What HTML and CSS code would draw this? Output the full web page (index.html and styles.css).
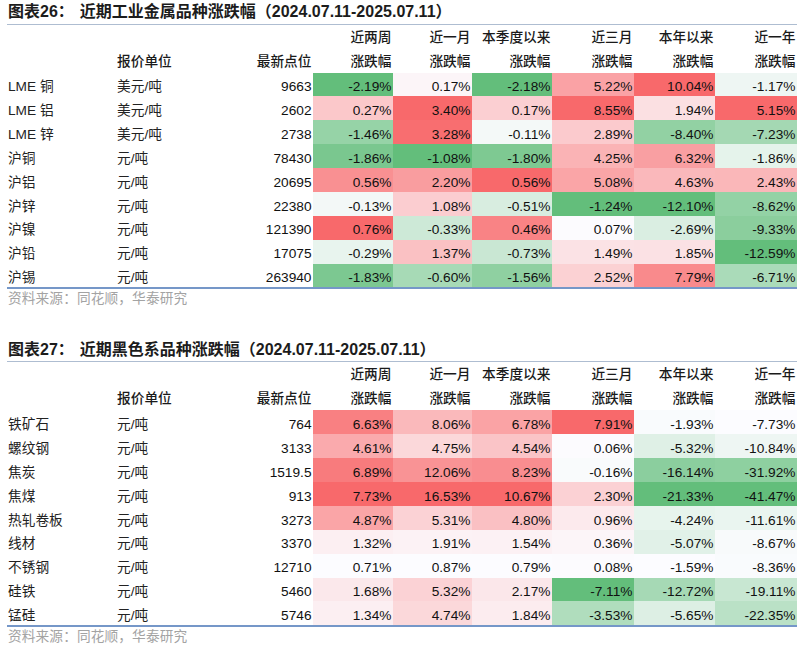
FILE: index.html
```html
<!DOCTYPE html>
<html lang="zh-CN">
<head>
<meta charset="utf-8">
<title>近期金属及黑色系品种涨跌幅</title>
<link rel="stylesheet" href="styles.css">
</head>
<body>
<div class="page">
  <section class="figure">
    <h2 class="fig-title"><span class="fig-no">图表26：</span><span class="fig-name">近期工业金属品种涨跌幅（2024.07.11-2025.07.11）</span></h2>
    <table class="data-table">
      <colgroup>
        <col class="c-name"><col class="c-unit"><col class="c-val">
        <col class="c-p1"><col class="c-p2"><col class="c-p3"><col class="c-p4"><col class="c-p5"><col class="c-p6">
      </colgroup>
      <thead>
        <tr><th></th><th></th><th></th><th>近两周</th><th>近一月</th><th>本季度以来</th><th>近三月</th><th>本年以来</th><th>近一年</th></tr>
        <tr><th></th><th class="left">报价单位</th><th>最新点位</th><th>涨跌幅</th><th>涨跌幅</th><th>涨跌幅</th><th>涨跌幅</th><th>涨跌幅</th><th>涨跌幅</th></tr>
      </thead>
      <tbody>
        <tr><td class="name">LME 铜</td><td class="unit">美元/吨</td><td>9663</td><td>-2.19%</td><td>0.17%</td><td>-2.18%</td><td>5.22%</td><td>10.04%</td><td>-1.17%</td></tr>
        <tr><td class="name">LME 铝</td><td class="unit">美元/吨</td><td>2602</td><td>0.27%</td><td>3.40%</td><td>0.17%</td><td>8.55%</td><td>1.94%</td><td>5.15%</td></tr>
        <tr><td class="name">LME 锌</td><td class="unit">美元/吨</td><td>2738</td><td>-1.46%</td><td>3.28%</td><td>-0.11%</td><td>2.89%</td><td>-8.40%</td><td>-7.23%</td></tr>
        <tr><td class="name">沪铜</td><td class="unit">元/吨</td><td>78430</td><td>-1.86%</td><td>-1.08%</td><td>-1.80%</td><td>4.25%</td><td>6.32%</td><td>-1.86%</td></tr>
        <tr><td class="name">沪铝</td><td class="unit">元/吨</td><td>20695</td><td>0.56%</td><td>2.20%</td><td>0.56%</td><td>5.08%</td><td>4.63%</td><td>2.43%</td></tr>
        <tr><td class="name">沪锌</td><td class="unit">元/吨</td><td>22380</td><td>-0.13%</td><td>1.08%</td><td>-0.51%</td><td>-1.24%</td><td>-12.10%</td><td>-8.62%</td></tr>
        <tr><td class="name">沪镍</td><td class="unit">元/吨</td><td>121390</td><td>0.76%</td><td>-0.33%</td><td>0.46%</td><td>0.07%</td><td>-2.69%</td><td>-9.33%</td></tr>
        <tr><td class="name">沪铅</td><td class="unit">元/吨</td><td>17075</td><td>-0.29%</td><td>1.37%</td><td>-0.73%</td><td>1.49%</td><td>1.85%</td><td>-12.59%</td></tr>
        <tr><td class="name">沪锡</td><td class="unit">元/吨</td><td>263940</td><td>-1.83%</td><td>-0.60%</td><td>-1.56%</td><td>2.52%</td><td>7.79%</td><td>-6.71%</td></tr>
      </tbody>
    </table>
    <p class="source">资料来源：同花顺，华泰研究</p>
  </section>

  <section class="figure second">
    <h2 class="fig-title"><span class="fig-no">图表27：</span><span class="fig-name">近期黑色系品种涨跌幅（2024.07.11-2025.07.11）</span></h2>
    <table class="data-table">
      <colgroup>
        <col class="c-name"><col class="c-unit"><col class="c-val">
        <col class="c-p1"><col class="c-p2"><col class="c-p3"><col class="c-p4"><col class="c-p5"><col class="c-p6">
      </colgroup>
      <thead>
        <tr><th></th><th></th><th></th><th>近两周</th><th>近一月</th><th>本季度以来</th><th>近三月</th><th>本年以来</th><th>近一年</th></tr>
        <tr><th></th><th class="left">报价单位</th><th>最新点位</th><th>涨跌幅</th><th>涨跌幅</th><th>涨跌幅</th><th>涨跌幅</th><th>涨跌幅</th><th>涨跌幅</th></tr>
      </thead>
      <tbody>
        <tr><td class="name">铁矿石</td><td class="unit">元/吨</td><td>764</td><td>6.63%</td><td>8.06%</td><td>6.78%</td><td>7.91%</td><td>-1.93%</td><td>-7.73%</td></tr>
        <tr><td class="name">螺纹钢</td><td class="unit">元/吨</td><td>3133</td><td>4.61%</td><td>4.75%</td><td>4.54%</td><td>0.06%</td><td>-5.32%</td><td>-10.84%</td></tr>
        <tr><td class="name">焦炭</td><td class="unit">元/吨</td><td>1519.5</td><td>6.89%</td><td>12.06%</td><td>8.23%</td><td>-0.16%</td><td>-16.14%</td><td>-31.92%</td></tr>
        <tr><td class="name">焦煤</td><td class="unit">元/吨</td><td>913</td><td>7.73%</td><td>16.53%</td><td>10.67%</td><td>2.30%</td><td>-21.33%</td><td>-41.47%</td></tr>
        <tr><td class="name">热轧卷板</td><td class="unit">元/吨</td><td>3273</td><td>4.87%</td><td>5.31%</td><td>4.80%</td><td>0.96%</td><td>-4.24%</td><td>-11.61%</td></tr>
        <tr><td class="name">线材</td><td class="unit">元/吨</td><td>3370</td><td>1.32%</td><td>1.91%</td><td>1.54%</td><td>0.36%</td><td>-5.07%</td><td>-8.67%</td></tr>
        <tr><td class="name">不锈钢</td><td class="unit">元/吨</td><td>12710</td><td>0.71%</td><td>0.87%</td><td>0.79%</td><td>0.08%</td><td>-1.59%</td><td>-8.36%</td></tr>
        <tr><td class="name">硅铁</td><td class="unit">元/吨</td><td>5460</td><td>1.68%</td><td>5.32%</td><td>2.17%</td><td>-7.11%</td><td>-12.72%</td><td>-19.11%</td></tr>
        <tr><td class="name">锰硅</td><td class="unit">元/吨</td><td>5746</td><td>1.34%</td><td>4.74%</td><td>1.84%</td><td>-3.53%</td><td>-5.65%</td><td>-22.35%</td></tr>
      </tbody>
    </table>
    <p class="source">资料来源：同花顺，华泰研究</p>
  </section>
</div>
<script src="script.js"></script>
</body>
</html>
```

FILE: styles.css
```css
* { box-sizing: border-box; }

html, body {
  margin: 0;
  padding: 0;
  background: #ffffff;
}

body {
  font-family: "Liberation Sans", "Noto Sans CJK SC", sans-serif;
  color: #141414;
}

.page {
  width: 797px;
  padding-left: 7px;
}

.figure {
  width: 790px;
}

.figure.second {
  margin-top: 28.5px;
}

.fig-title {
  margin: 0;
  height: 24.5px;
  padding: 1px 0 0 1px;
  line-height: 22px;
  font-size: 16px;
  font-weight: 700;
  color: #1c1c1c;
  border-bottom: 1.5px solid #aebdd1;
  white-space: nowrap;
}

.fig-name {
  margin-left: 6px;
}

.data-table {
  width: 790px;
  table-layout: fixed;
  border-collapse: separate;
  border-spacing: 0;
  border-bottom: 2px solid #7597c8;
  font-size: 13.7px;
}

.c-name { width: 110px; }
.c-unit { width: 116px; }
.c-val  { width: 80px; }
.c-p1   { width: 80px; }
.c-p2   { width: 79px; }
.c-p3   { width: 80px; }
.c-p4   { width: 82px; }
.c-p5   { width: 81px; }
.c-p6   { width: 82px; }

.data-table th,
.data-table td {
  padding: 0 1.5px 0 0;
  text-align: right;
  vertical-align: bottom;
  line-height: 16px;
  white-space: nowrap;
  overflow: hidden;
}

.data-table thead tr {
  height: 24px;
}

.data-table th {
  font-weight: 500;
  padding-bottom: 3px;
  color: #1a1a1a;
}

.data-table th.left {
  text-align: left;
}

.data-table tbody tr {
  height: 23.875px;
}

.data-table td {
  padding-bottom: 1.2px;
  color: #111111;
}

.data-table td.name {
  text-align: left;
  padding-left: 1px;
  color: #222222;
}

.data-table td.unit {
  text-align: left;
  color: #222222;
}

.source {
  margin: 0;
  height: 20px;
  line-height: 20px;
  padding-left: 1px;
  font-size: 13.7px;
  color: #a3a3a3;
  letter-spacing: 0.1px;
}
```

FILE: script.js
```js
(function () {
  var GREEN = [99, 190, 123];
  var WHITE = [252, 252, 255];
  var RED = [248, 105, 107];

  function mix(a, b, t) {
    return [0, 1, 2].map(function (i) {
      return Math.round(a[i] + (b[i] - a[i]) * t);
    });
  }

  document.querySelectorAll('.data-table').forEach(function (table) {
    var rows = Array.prototype.slice.call(table.querySelectorAll('tbody tr'));
    var ncols = rows[0].cells.length;
    for (var c = 3; c < ncols; c++) {
      var cells = rows.map(function (r) { return r.cells[c]; });
      var vals = cells.map(function (td) { return parseFloat(td.textContent); });
      var lo = Math.min.apply(null, vals);
      var hi = Math.max.apply(null, vals);
      var mid = Math.min(Math.max(0, lo), hi);
      cells.forEach(function (td, i) {
        var v = vals[i];
        var col;
        if (v <= mid) {
          col = mix(GREEN, WHITE, mid === lo ? 1 : (v - lo) / (mid - lo));
        } else {
          col = mix(WHITE, RED, (v - mid) / (hi - mid));
        }
        td.style.backgroundColor = 'rgb(' + col.join(',') + ')';
      });
    }
  });
})();
```
